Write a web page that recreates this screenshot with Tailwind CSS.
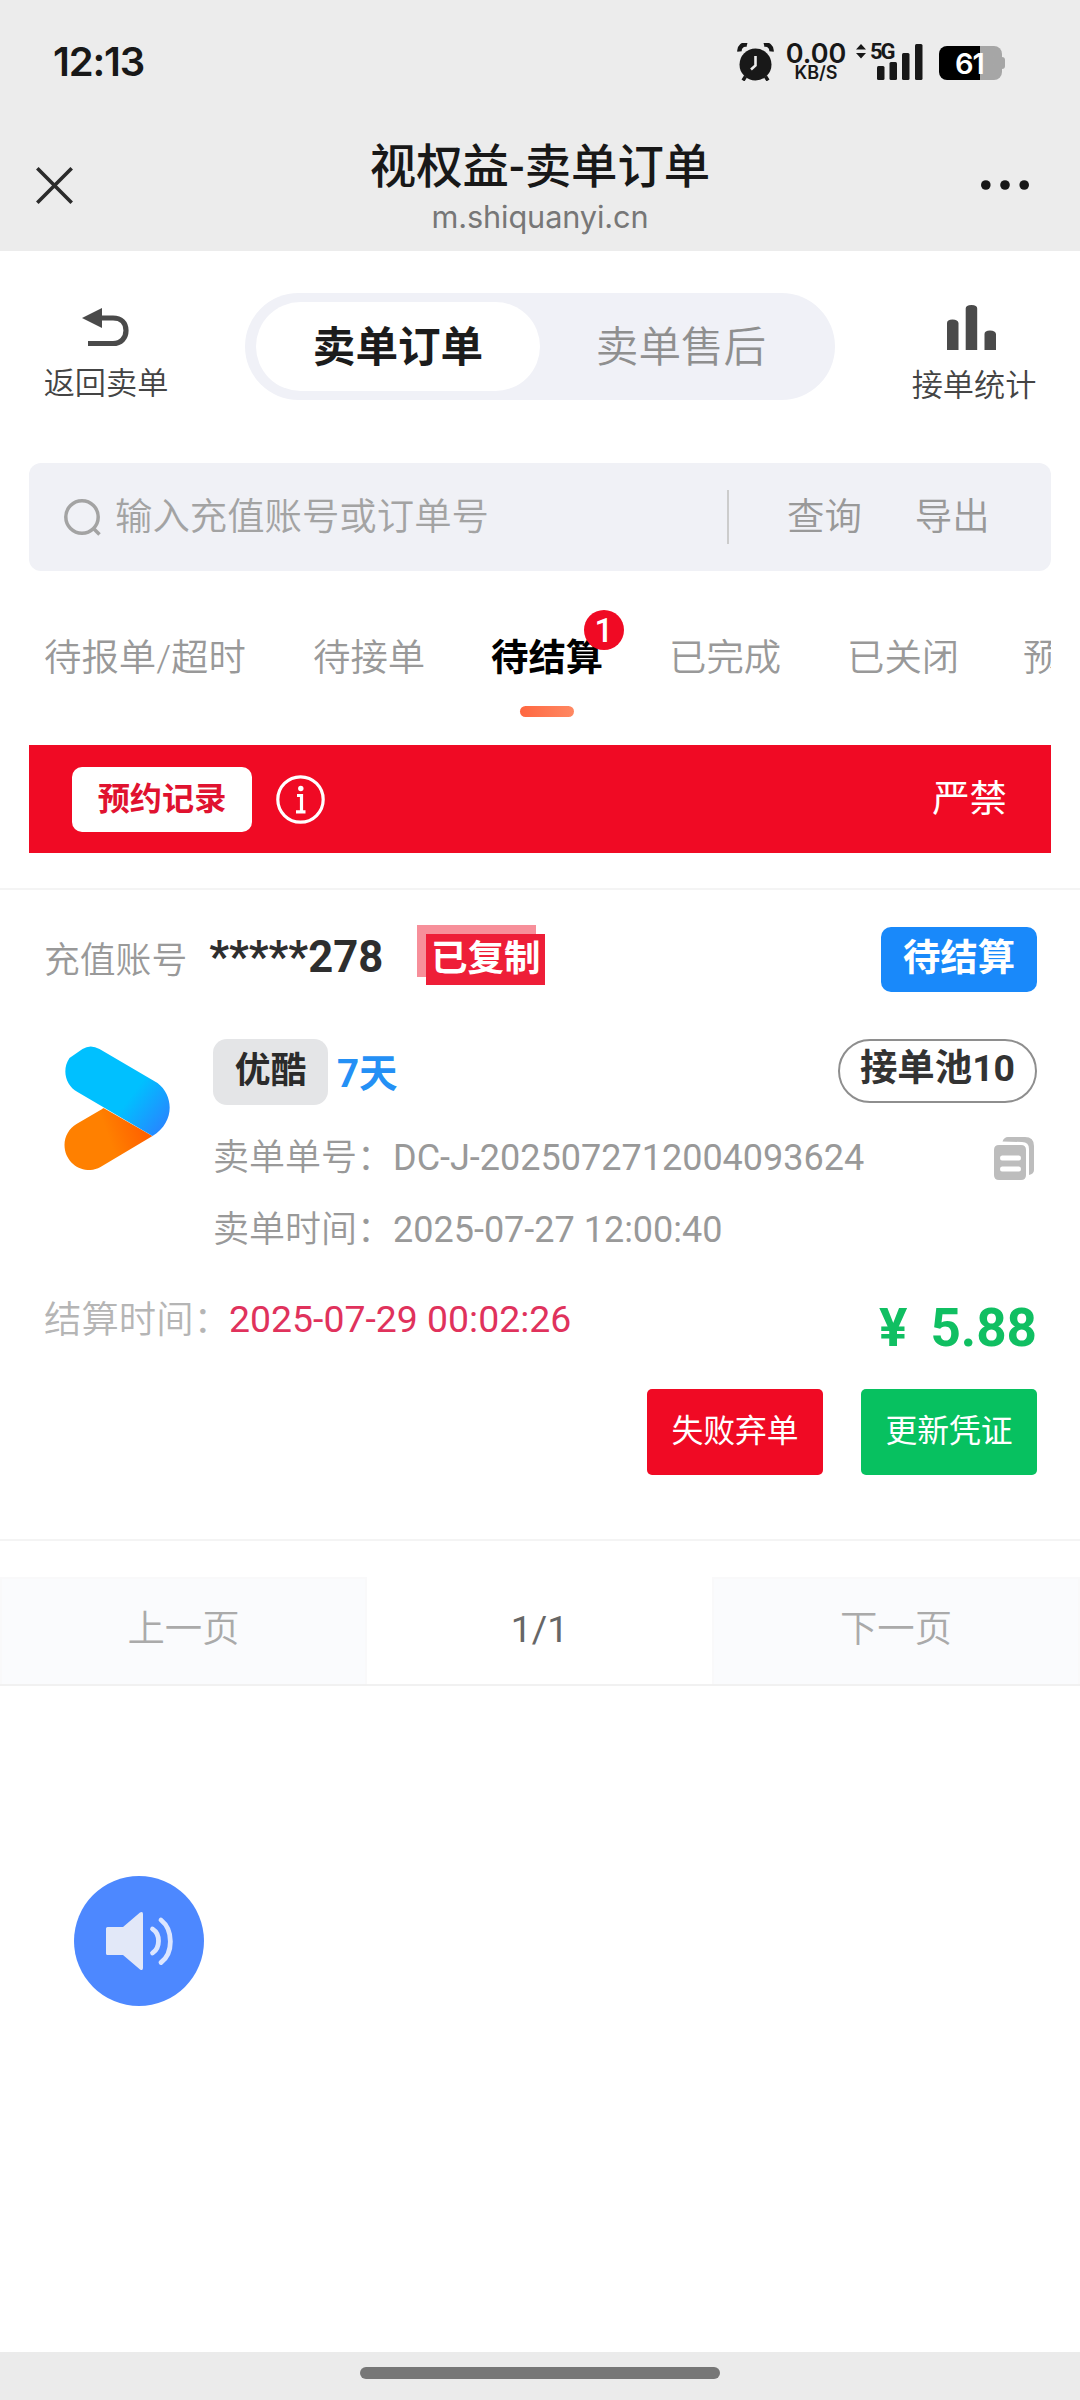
<!DOCTYPE html>
<html lang="zh-CN">
<head>
<meta charset="utf-8">
<title>视权益-卖单订单</title>
<script src="https://cdn.jsdelivr.net/npm/@tailwindcss/browser@4"></script>
</head>
<body class="bg-white">
<div class="relative flex h-[2400px] w-[1080px] flex-col overflow-hidden bg-white font-['Roboto','Noto_Sans_CJK_SC',sans-serif] leading-none whitespace-nowrap text-[#999]">

  <!-- Status bar and title bar -->
  <header class="flex h-[251px] shrink-0 flex-col bg-[#ececec] text-[#181818]">
    <div class="flex h-[124px] items-center pl-[53px]">
      <span class="w-[684px] font-['Inter',sans-serif] text-[40px] font-semibold tracking-[-1.200px]">12:13</span>
      <svg class="h-[38px] w-[37px]" viewBox="0 0 37 38" fill="none">
        <circle cx="18.500" cy="21.500" r="16" fill="#181818"/>
        <path d="M2.500 8.500C2 3.500 6 .8 10 1.800M34.500 8.500C35 3.500 31 .8 27 1.800" stroke="#181818" stroke-width="4.500"/>
        <path d="M8.500 33.500L6 37.500M28.500 33.500L31 37.500" stroke="#181818" stroke-width="3.500"/>
        <path d="M18.500 13V22.500L14 26.500" stroke="#ececec" stroke-width="2.600"/>
      </svg>
      <div class="ml-3 flex w-[60px] flex-col items-center font-['Inter',sans-serif] font-semibold">
        <span class="text-[27px] leading-[21px]">0.00</span>
        <span class="text-[18px] leading-[17px]">KB/S</span>
      </div>
      <div class="relative ml-2.5 h-9 w-[67px]">
        <svg class="h-9 w-[67px]" viewBox="0 0 67 36" fill="#181818">
          <path d="M0 5.500L5 0L10 5.500ZM0 9H10L5 14.500Z"/>
          <rect x="21" y="22" width="7.500" height="14" rx="1.500"/>
          <rect x="33.500" y="18" width="7.500" height="18" rx="1.500"/>
          <rect x="46" y="9" width="7.500" height="27" rx="1.500"/>
          <rect x="59" y="0" width="7.500" height="36" rx="1.500"/>
        </svg>
        <span class="absolute -top-[3px] left-[14px] text-[22px] font-bold tracking-[-2px]">5G</span>
      </div>
      <div class="relative ml-[16px] mt-[2px] flex h-[34px] w-[66px] items-center">
        <div class="h-[34px] w-[63px] rounded-[8px] bg-linear-to-r from-black from-65% to-[#a6a6a6] to-65%"></div>
        <div class="h-3 w-[3px] rounded-r-sm bg-[#a6a6a6]"></div>
        <span class="absolute top-[3px] left-[16px] font-['Inter',sans-serif] text-[29px] leading-[29px] font-semibold tracking-[-1px] text-white">61</span>
      </div>
    </div>
    <div class="grid h-[127px] grid-cols-[1fr_auto_1fr] items-start pr-[51px] pl-[36px]">
      <svg class="mt-[43px] h-[37px] w-[37px]" viewBox="0 0 37 37" stroke="#2b2b2b" stroke-width="3.600"><path d="M1.300 1.300L35.700 35.700M35.700 1.300L1.300 35.700"/></svg>
      <div class="flex flex-col items-center pt-[20px] pl-[15px]">
        <h1 class="text-[46.400px] leading-[47px] font-medium">视权益-卖单订单</h1>
        <p class="mt-[9px] font-['Inter',sans-serif] text-[30.700px] leading-[34px] tracking-[-0.100px] text-[#777]">m.shiquanyi.cn</p>
      </div>
      <svg class="mt-[56px] h-[10px] w-[48px] justify-self-end" viewBox="0 0 48 10" fill="#181818"><circle cx="4.800" cy="5" r="4.800"/><circle cx="24" cy="5" r="4.800"/><circle cx="43.200" cy="5" r="4.800"/></svg>
    </div>
  </header>

  <!-- Order type switch -->
  <nav class="flex h-[212px] shrink-0 items-start px-[44px] pt-[42px] text-[#444]">
    <div class="flex w-[124px] flex-col items-center pt-[15px]">
      <svg class="mr-[2px] h-[39px] w-[47px]" viewBox="0 0 47 39" fill="none"><path d="M0 10L20 0V20Z" fill="#4a4a4a"/><path d="M18 10H31C39 10 44 15 44 22.500S39 35.500 31 35.500H6" stroke="#4a4a4a" stroke-width="5.200"/></svg>
      <span class="mt-[21px] text-[31.200px] font-[350]">返回卖单</span>
    </div>
    <div class="ml-[77px] flex h-[107px] w-[590px] rounded-full bg-[#f0f1f7] py-[9px] pl-[11px] text-[42.600px]">
      <div class="flex w-[284px] items-center justify-center rounded-full bg-white pt-px font-bold text-[#1c1c1c]">卖单订单</div>
      <div class="flex w-[282px] items-center justify-center pt-px font-[350] text-[#8f8f8f]">卖单售后</div>
    </div>
    <div class="ml-[77px] flex w-[124px] flex-col items-center pt-[12px]">
      <svg class="mr-[5px] h-[45px] w-[49px]" viewBox="0 0 49 45" fill="#4a4a4a"><path d="M0 45V18Q0 14.500 5.500 14.500T11.500 18V45ZM18.700 45V3.500Q18.700 0 24.500 0T30.200 3.500V45ZM37.500 45V29Q37.500 25.500 43 25.500T49 29V45Z"/></svg>
      <span class="mt-[20px] text-[31.200px] font-[350]">接单统计</span>
    </div>
  </nav>

  <main class="flex flex-col px-[29px]">
    <!-- Search -->
    <div class="flex h-[108px] items-center rounded-xl bg-[#f0f1f6] pl-[35px] text-[37.400px] font-[350]">
      <svg class="h-[38px] w-[38px]" viewBox="0 0 38 38" fill="none" stroke="#a3a3a3" stroke-width="3.500"><circle cx="18" cy="19" r="16.200"/><path d="M29.500 30.500L35.500 36.500"/></svg>
      <span class="ml-[13px] w-[612px] pt-px text-[#a3a3a3]">输入充值账号或订单号</span>
      <i class="h-[54px] w-[2px] bg-[#ccc]"></i>
      <span class="ml-[58px] pt-px">查询</span>
      <span class="ml-[53px] pt-px">导出</span>
    </div>

    <!-- Status tabs -->
    <div class="flex h-[174px] overflow-hidden pt-[69px] pl-[15px] text-[37.400px] font-[350]">
      <span class="w-[269px] shrink-0">待报单/超时</span>
      <span class="w-[178px] shrink-0">待接单</span>
      <div class="relative w-[178px] shrink-0 font-bold text-black">待结算
        <b class="absolute -top-[30px] left-[93px] flex size-[40px] items-center justify-center rounded-full bg-[#f00a24] text-[33px] font-medium text-white">1</b>
        <i class="absolute top-[66px] left-[29px] h-[11px] w-[54px] rounded-full bg-linear-to-r from-[#ff6740] to-[#ff8862]"></i>
      </div>
      <span class="w-[178px] shrink-0">已完成</span>
      <span class="w-[176px] shrink-0">已关闭</span>
      <span class="shrink-0">预约</span>
    </div>

    <!-- Notice -->
    <div class="flex h-[108px] items-center bg-[#f00a24] pr-[44px] pl-[43px] text-white">
      <div class="flex h-[65px] w-[180px] items-center justify-center rounded-[10px] bg-white text-[32.200px] font-bold text-[#e0122f]">预约记录</div>
      <svg class="ml-[24px] h-[49px] w-[49px]" viewBox="0 0 49 49" fill="none" stroke="#fff"><circle cx="24.500" cy="24.500" r="22.700" stroke-width="3.200"/><circle cx="24.800" cy="13.500" r="2.700" fill="#fff" stroke="none"/><path d="M21 20.500H25.500V36.500M20 36.800H29.500" stroke-width="3.200"/></svg>
      <span class="ml-auto pt-[2px] text-[37.400px]">严禁</span>
    </div>
  </main>

  <!-- Order card -->
  <section class="mt-[35px] flex h-[653px] shrink-0 flex-col border-y-2 border-[#f4f4f4] pr-[43px] pl-[44px]">
    <div class="mt-[37px] flex h-[65px] items-center">
      <span class="pt-[4px] text-[35.800px] font-[350]">充值账号</span>
      <span class="ml-[22px] w-[208px] pb-[4px] text-[43.600px] font-bold text-[#2e2e2e]">*****278</span>
      <div class="relative -mt-[2px] h-[60px] w-[128px] self-start">
        <div class="h-[52px] w-[119px] bg-[#f78f9a]"></div>
        <div class="absolute top-[9px] left-[9px] flex h-[51px] w-[119px] items-center justify-center bg-[#ee1e38] text-[36.500px] font-bold text-white">已复制</div>
      </div>
      <div class="ml-auto flex h-[65px] w-[156px] items-center justify-center rounded-[10px] bg-[#1989fa] pb-px text-[37.400px] font-bold text-white">待结算</div>
    </div>

    <div class="mt-[47px] flex h-[214px]">
      <svg class="mt-[7px] ml-[20px] h-[124px] w-[107px]" viewBox="0 0 106 124">
        <defs>
          <linearGradient id="blue" x1="45" y1="40" x2="98" y2="80" gradientUnits="userSpaceOnUse"><stop offset=".35" stop-color="#00c0ff"/><stop offset="1" stop-color="#2589ff"/></linearGradient>
          <linearGradient id="orange" x1="20" y1="95" x2="76" y2="75" gradientUnits="userSpaceOnUse"><stop offset=".4" stop-color="#ff8000"/><stop offset="1" stop-color="#ff6200"/></linearGradient>
        </defs>
        <path d="M39 62L88 90L36 121C20 130 0 118 0 99C0 90 5 82 12 78L36 64Q39 62 39 62Z" fill="url(#orange)"/>
        <path d="M5 12L18 3Q26-2 35 3L93 37C110 50 110 77 88 90L13 46C1 39-3 24 5 12Z" fill="url(#blue)"/>
      </svg>
      <div class="ml-[42px] flex flex-1 flex-col">
        <div class="flex h-[66px] shrink-0 items-start">
          <div class="flex h-[66px] w-[115px] items-center justify-center rounded-[14px] bg-[#e4e5e7] text-[35.800px] font-bold text-[#2b2b2b]">优酷</div>
          <span class="mt-[16px] ml-[9px] text-[38.500px] font-bold text-[#2490f5]">7天</span>
          <div class="ml-auto flex h-[64px] w-[199px] items-center justify-center rounded-full border-2 border-[#8e8e8e] pb-1 text-[37.400px] font-bold text-[#333]">接单池10</div>
        </div>
        <div class="mt-[17px] flex h-[72px] shrink-0 items-center text-[36px]">
          <span class="w-[180px] font-[350]">卖单单号：</span><span>DC-J-2025072712004093624</span>
          <svg class="mr-[3px] ml-auto h-[43px] w-[40px]" viewBox="0 0 40 43" fill="#bdbdbd">
            <path d="M8.500 4.500Q10 0 14 0H31Q40 0 40 9V33Q40 37 35 38V12Q35 5 28 5Z"/>
            <path fill-rule="evenodd" d="M5 8H27Q32 8 32 13V38Q32 43 27 43H5Q0 43 0 38V13Q0 8 5 8ZM8 18.500Q6 18.500 6 21T8 23.500H25Q27 23.500 27 21T25 18.500ZM8 29.500Q6 29.500 6 32T8 34.500H25Q27 34.500 27 32T25 29.500Z"/>
          </svg>
        </div>
        <div class="flex h-[72px] shrink-0 items-center text-[36px]">
          <span class="w-[180px] font-[350]">卖单时间：</span><span>2025-07-27 12:00:40</span>
        </div>
      </div>
    </div>

    <div class="mt-[28px] flex h-[80px] items-start text-[37.400px]">
      <span class="mt-[21px] w-[185px] font-[350] text-[#b5b5b5]">结算时间：</span>
      <span class="mt-[20px] text-[#e0325c]">2025-07-29 00:02:26</span>
      <span class="mt-[21px] ml-auto flex text-[53px] font-bold text-[#10bf62]"><span class="mr-[23px]">¥</span>5.88</span>
    </div>

    <div class="mt-[28px] flex justify-end gap-[38px] text-[31.800px] text-white">
      <div class="flex h-[86px] w-[176px] items-center justify-center rounded-[5px] bg-[#f00a24]">失败弃单</div>
      <div class="flex h-[86px] w-[176px] items-center justify-center rounded-[5px] bg-[#07c160]">更新凭证</div>
    </div>
  </section>

  <!-- Pagination -->
  <footer class="mt-[36px] flex h-[109px] shrink-0 items-stretch border-b-2 border-[#f1f1f1] text-[37.400px]">
    <div class="flex w-[367px] items-center justify-center border-2 border-b-0 border-[#f9f9fa] bg-[#fafbfd] pb-1 font-[350] text-[#aaa]">上一页</div>
    <div class="flex flex-1 items-center justify-center pb-[2px] text-[#666]">1/1</div>
    <div class="flex w-[368px] items-center justify-center border-2 border-b-0 border-[#f9f9fa] bg-[#fafbfd] pb-1 font-[350] text-[#aaa]">下一页</div>
  </footer>

  <!-- Floating sound button -->
  <button class="absolute top-[1876px] left-[74px] flex size-[130px] items-center justify-center rounded-full bg-[#4d88ff]">
    <svg class="h-[58px] w-[67px]" viewBox="0 0 67 58" fill="#e2e8f8"><path d="M1.500 15H17L34 .5Q37 -1 37 2V56Q37 59 34 57.500L17 43H1.500Q0 43 0 41.500V16.500Q0 15 1.500 15Z"/><path d="M46.500 17C54.500 22 54.500 36 46.500 41M55 8C67.500 18 67.500 41 55 50.500" fill="none" stroke="#dce6ff" stroke-width="4.800" stroke-linecap="round"/></svg>
  </button>

  <!-- Gesture bar -->
  <div class="mt-auto flex h-[48px] shrink-0 justify-center bg-[#ebebeb] pt-[15px]"><div class="h-3 w-[360px] rounded-full bg-[#777]"></div></div>
</div>
</body>
</html>
